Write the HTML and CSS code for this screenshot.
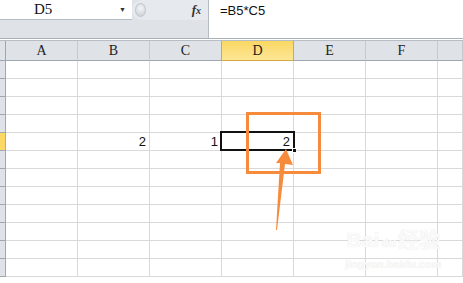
FILE: index.html
```html
<!DOCTYPE html>
<html lang="en">
<head>
    <meta charset="UTF-8">
    <title>Sheet</title>
    <link rel="stylesheet" href="styles.css">
</head>
<body>
    <div class="toolbar">
        <div class="left-bar">
            <div class="top-row">
                <div class="name-box">
                    <span class="cell-ref">D5</span>
                    <span class="drop">&#9660;</span>
                </div>
                <div class="knob-area">
                    <span class="knob"></span>
                    <span class="fx"><i>f</i><small><i>x</i></small></span>
                </div>
            </div>
        </div>
        <div class="formula">=B5*C5</div>
    </div>

    <div class="sheet">
        <div class="row head">
            <div class="rh"></div>
            <div class="c">A</div>
            <div class="c">B</div>
            <div class="c">C</div>
            <div class="c active">D</div>
            <div class="c">E</div>
            <div class="c">F</div>
            <div class="c rest"></div>
        </div>
        <div class="row"><div class="rh"></div><div class="c"></div><div class="c"></div><div class="c"></div><div class="c"></div><div class="c"></div><div class="c"></div><div class="c rest"></div></div>
        <div class="row"><div class="rh"></div><div class="c"></div><div class="c"></div><div class="c"></div><div class="c"></div><div class="c"></div><div class="c"></div><div class="c rest"></div></div>
        <div class="row"><div class="rh"></div><div class="c"></div><div class="c"></div><div class="c"></div><div class="c"></div><div class="c"></div><div class="c"></div><div class="c rest"></div></div>
        <div class="row"><div class="rh"></div><div class="c"></div><div class="c"></div><div class="c"></div><div class="c"></div><div class="c"></div><div class="c"></div><div class="c rest"></div></div>
        <div class="row"><div class="rh active"></div><div class="c"></div><div class="c num">2</div><div class="c num">1</div><div class="c num">2</div><div class="c"></div><div class="c"></div><div class="c rest"></div></div>
        <div class="row"><div class="rh"></div><div class="c"></div><div class="c"></div><div class="c"></div><div class="c"></div><div class="c"></div><div class="c"></div><div class="c rest"></div></div>
        <div class="row"><div class="rh"></div><div class="c"></div><div class="c"></div><div class="c"></div><div class="c"></div><div class="c"></div><div class="c"></div><div class="c rest"></div></div>
        <div class="row"><div class="rh"></div><div class="c"></div><div class="c"></div><div class="c"></div><div class="c"></div><div class="c"></div><div class="c"></div><div class="c rest"></div></div>
        <div class="row"><div class="rh"></div><div class="c"></div><div class="c"></div><div class="c"></div><div class="c"></div><div class="c"></div><div class="c"></div><div class="c rest"></div></div>
        <div class="row"><div class="rh"></div><div class="c"></div><div class="c"></div><div class="c"></div><div class="c"></div><div class="c"></div><div class="c"></div><div class="c rest"></div></div>
        <div class="row"><div class="rh"></div><div class="c"></div><div class="c"></div><div class="c"></div><div class="c"></div><div class="c"></div><div class="c"></div><div class="c rest"></div></div>
        <div class="row"><div class="rh"></div><div class="c"></div><div class="c"></div><div class="c"></div><div class="c"></div><div class="c"></div><div class="c"></div><div class="c rest"></div></div>

        <!-- selected cell D5 -->
        <div class="selection"><span class="handle"></span></div>

        <div class="watermark">
            <div class="wm-logo">Bai<span class="paw">du</span>经验</div>
            <div class="wm-url">jingyan.baidu.com</div>
        </div>
    </div>

    <!-- annotation drawn on top of the screenshot -->
    <svg class="mark" width="463" height="283" viewBox="0 0 463 283">
        <rect x="247.5" y="113.5" width="72" height="59" fill="none" stroke="#f68b3c" stroke-width="3"/>
        <polygon points="286,149 293,165 285,164 277,230 276,230 280,163 276,163" fill="#f68b3c"/>
    </svg>
</body>
</html>
```

FILE: styles.css
```css
* {
    box-sizing: border-box;
}
body {
    margin: 0;
    width: 463px;
    height: 283px;
    overflow: hidden;
    background: #fff;
    font-family: "Liberation Serif", serif;
    position: relative;
}
.toolbar {
    display: flex;
    height: 39px;
    border-bottom: 1px solid #a9b0b8;
}
.left-bar {
    width: 209px;
    background: #dfe3e8;
    border-right: 1px solid #b6bcc4;
}
.top-row {
    display: flex;
    height: 20px;
}
.name-box {
    width: 132px;
    background: #fff;
    border-bottom: 1px solid #b6bcc4;
    display: flex;
    align-items: center;
    padding-left: 34px;
    font-size: 15px;
    color: #111;
}
.cell-ref {
    flex: 1;
}
.drop {
    font-size: 7px;
    color: #333;
    margin-right: 6px;
}
.knob-area {
    flex: 1;
    display: flex;
    align-items: center;
    justify-content: space-between;
    background: #e6e9ed;
    border-radius: 10px 0 0 10px;
    padding: 0 7px 0 3px;
}
.knob {
    width: 11px;
    height: 14px;
    border-radius: 50%;
    background: radial-gradient(circle at 50% 35%, #f4f5f7, #c7ccd3);
    border: 1px solid #c3c8cf;
}
.fx {
    font-size: 13px;
    font-weight: bold;
    color: #333;
}
.fx small {
    font-size: 10px;
}
.formula {
    flex: 1;
    padding: 3px 0 0 11px;
    font-family: "Liberation Sans", sans-serif;
    font-size: 13px;
    color: #111;
}
.sheet {
    position: relative;
    margin-top: 1px;
    border-top: 1px solid #b7bdc5;
}
.row {
    display: flex;
    height: 18px;
}
.row.head {
    height: 20px;
}
.rh {
    width: 6px;
    background: #dfe3e8;
    border-right: 1px solid #9ea7b3;
    border-bottom: 1px solid #9ea7b3;
}
.rh.active {
    background: #fcd965;
    border-right-color: #e3a43c;
}
.c {
    width: 72px;
    border-right: 1px solid #d9d9d9;
    border-bottom: 1px solid #d9d9d9;
    font-size: 13px;
    line-height: 17px;
    color: #111;
}
.c.rest {
    flex: 1;
}
.head .c {
    background: #dfe3e8;
    border-right-color: #c5cad1;
    border-bottom-color: #9ea7b3;
    text-align: center;
    line-height: 19px;
    font-size: 14px;
    color: #222;
}
.head .c.active {
    background: linear-gradient(#f9d762, #fde796);
    border: 1px solid #d9a644;
    border-top: none;
    margin-left: -1px;
    width: 73px;
}
.c.num {
    text-align: right;
    padding-right: 3px;
    font-family: "Liberation Sans", sans-serif;
    font-size: 13px;
}
.selection {
    position: absolute;
    left: 220px;
    top: 90px;
    width: 75px;
    height: 20px;
    border: 2px solid #111;
}
.handle {
    position: absolute;
    right: -4px;
    bottom: -4px;
    width: 5px;
    height: 5px;
    background: #111;
    border: 1px solid #fff;
}
.watermark {
    position: absolute;
    left: 345px;
    top: 186px;
    text-align: center;
    color: #fafafa;
    text-shadow: 0 0 1px #e2e2e2;
}
.wm-logo {
    font-family: "Liberation Sans", "Noto Sans CJK SC", sans-serif;
    font-size: 21px;
    font-weight: bold;
    line-height: 26px;
}
.paw {
    font-size: 12px;
    padding: 2px;
}
.wm-url {
    font-family: "Liberation Sans", sans-serif;
    font-size: 11px;
    font-weight: bold;
    margin-top: 2px;
}
.mark {
    position: absolute;
    left: 0;
    top: 0;
}
```
